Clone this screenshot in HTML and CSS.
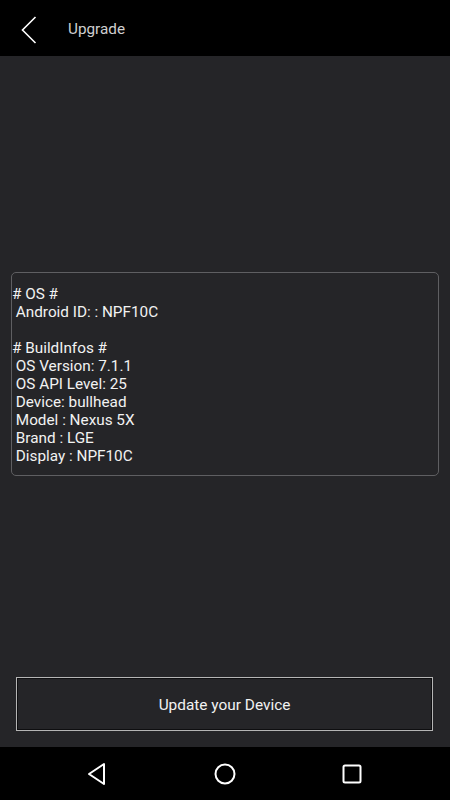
FILE: index.html
```html
<!DOCTYPE html>
<html>
<head>
<meta charset="utf-8">
<link rel="stylesheet" href="styles.css">
</head>
<body>
<div class="screen">
  <header class="topbar">
    <svg class="back" width="24" height="40" viewBox="0 0 24 40"><polyline points="15.5,10 2.5,23 15.5,36" fill="none" stroke="#fff" stroke-width="1.6"/></svg>
    <span class="title">Upgrade</span>
  </header>
  <main class="content">
    <div class="info"># OS #
 Android ID: : NPF10C

# BuildInfos #
 OS Version: 7.1.1
 OS API Level: 25
 Device: bullhead
 Model : Nexus 5X
 Brand : LGE
 Display : NPF10C</div>
    <div class="spacer"></div>
    <button class="update">Update your Device</button>
  </main>
  <nav class="navbar">
    <svg width="20" height="24" viewBox="0 0 20 24"><polygon points="17,2 17,22 2,12" fill="none" stroke="#fff" stroke-width="2" stroke-linejoin="round"/></svg>
    <svg width="24" height="24" viewBox="0 0 24 24"><circle cx="12" cy="12" r="9.5" fill="none" stroke="#fff" stroke-width="2"/></svg>
    <svg width="20" height="20" viewBox="0 0 20 20"><rect x="1.5" y="1.5" width="17" height="17" rx="1.5" fill="none" stroke="#fff" stroke-width="2"/></svg>
  </nav>
</div>
</body>
</html>
```
FILE: styles.css
```css
html, body {
  margin: 0;
  padding: 0;
  background: #252528;
}
.screen {
  width: 450px;
  height: 800px;
  display: flex;
  flex-direction: column;
  font-family: Roboto, "Noto Sans", sans-serif;
  background: #252528;
}
.topbar {
  height: 56px;
  background: #000;
  display: flex;
  align-items: center;
  flex-shrink: 0;
}
.back {
  margin-left: 20px;
  margin-top: -2px;
}
.title {
  margin-left: 24px;
  color: #cfcfcf;
  font-size: 15.3px;
  margin-top: 1px;
}
.content {
  flex: 1;
  display: flex;
  flex-direction: column;
  padding: 216px 11px 16px 11px;
}
.info {
  white-space: pre;
  color: #f2f2f2;
  font-size: 15.3px;
  line-height: 18px;
  border: 1px solid #5f5f62;
  border-radius: 5px;
  padding: 12px 0 10px 0;
  height: 204px;
  box-sizing: border-box;
}
.spacer {
  flex: 1;
}
.update {
  margin: 0 6px 0 5px;
  height: 54px;
  background: #252528;
  border: 1px solid #b5b5b5;
  box-shadow: inset 0 0 0 1px #0e0e10;
  color: #f2f2f2;
  font-family: Roboto, "Noto Sans", sans-serif;
  font-size: 15.4px;
  padding: 1px 0 0 0;
}
.navbar {
  height: 53px;
  background: #000;
  flex-shrink: 0;
  display: flex;
  align-items: center;
  justify-content: space-between;
  padding: 0 88px 0 87px;
}
```
